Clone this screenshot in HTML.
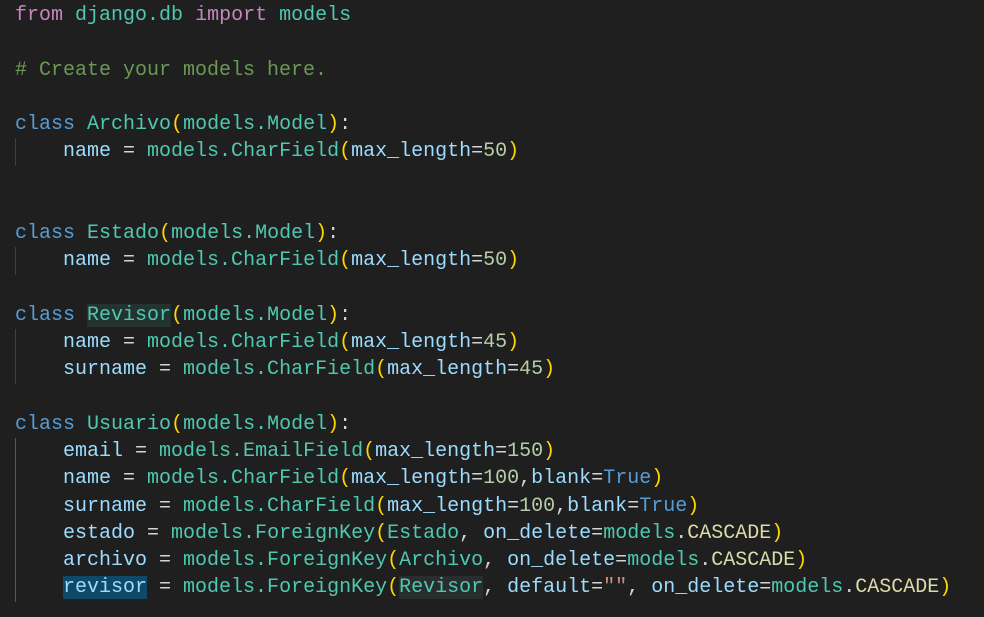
<!DOCTYPE html>
<html><head><meta charset="utf-8"><style>
html,body{margin:0;padding:0;background:#1f1f1f;width:984px;height:617px;overflow:hidden}
pre{margin:0;padding:2px 0 0 15px;font-family:"Liberation Mono",monospace;font-size:20px;line-height:27.25px;color:#d4d4d4;position:relative}
.k{color:#c586c0}.t{color:#4ec9b0}.b{color:#569cd6}.c{color:#6a9955}.v{color:#9cdcfe}.n{color:#b5cea8}.p{color:#ffd700}.s{color:#ce9178}.q{color:#dcdcaa}
.g{position:absolute;left:15px;width:1px;background:#404040}
.h1{background:#23332f}.h2{background:#0e4a68}.h3{background:#2a2d2e}
</style></head><body>
<div class="g" style="top:138px;height:28px"></div>
<div class="g" style="top:247px;height:28px"></div>
<div class="g" style="top:329px;height:55px"></div>
<div class="g" style="top:438px;height:164px;background:#585858"></div>
<pre><span class="k">from</span> <span class="t">django.db</span> <span class="k">import</span> <span class="t">models</span>

<span class="c"># Create your models here.</span>

<span class="b">class</span> <span class="t">Archivo</span><span class="p">(</span><span class="t">models.Model</span><span class="p">)</span>:
    <span class="v">name</span> = <span class="t">models.CharField</span><span class="p">(</span><span class="v">max_length</span>=<span class="n">50</span><span class="p">)</span>


<span class="b">class</span> <span class="t">Estado</span><span class="p">(</span><span class="t">models.Model</span><span class="p">)</span>:
    <span class="v">name</span> = <span class="t">models.CharField</span><span class="p">(</span><span class="v">max_length</span>=<span class="n">50</span><span class="p">)</span>

<span class="b">class</span> <span class="t h1">Revisor</span><span class="p">(</span><span class="t">models.Model</span><span class="p">)</span>:
    <span class="v">name</span> = <span class="t">models.CharField</span><span class="p">(</span><span class="v">max_length</span>=<span class="n">45</span><span class="p">)</span>
    <span class="v">surname</span> = <span class="t">models.CharField</span><span class="p">(</span><span class="v">max_length</span>=<span class="n">45</span><span class="p">)</span>

<span class="b">class</span> <span class="t">Usuario</span><span class="p">(</span><span class="t">models.Model</span><span class="p">)</span>:
    <span class="v">email</span> = <span class="t">models.EmailField</span><span class="p">(</span><span class="v">max_length</span>=<span class="n">150</span><span class="p">)</span>
    <span class="v">name</span> = <span class="t">models.CharField</span><span class="p">(</span><span class="v">max_length</span>=<span class="n">100</span>,<span class="v">blank</span>=<span class="b">True</span><span class="p">)</span>
    <span class="v">surname</span> = <span class="t">models.CharField</span><span class="p">(</span><span class="v">max_length</span>=<span class="n">100</span>,<span class="v">blank</span>=<span class="b">True</span><span class="p">)</span>
    <span class="v">estado</span> = <span class="t">models.ForeignKey</span><span class="p">(</span><span class="t">Estado</span>, <span class="v">on_delete</span>=<span class="t">models</span>.<span class="q">CASCADE</span><span class="p">)</span>
    <span class="v">archivo</span> = <span class="t">models.ForeignKey</span><span class="p">(</span><span class="t">Archivo</span>, <span class="v">on_delete</span>=<span class="t">models</span>.<span class="q">CASCADE</span><span class="p">)</span>
    <span class="v h2">revisor</span> = <span class="t">models.ForeignKey</span><span class="p">(</span><span class="t h3">Revisor</span>, <span class="v">default</span>=<span class="s">""</span>, <span class="v">on_delete</span>=<span class="t">models</span>.<span class="q">CASCADE</span><span class="p">)</span>
</pre>
</body></html>
